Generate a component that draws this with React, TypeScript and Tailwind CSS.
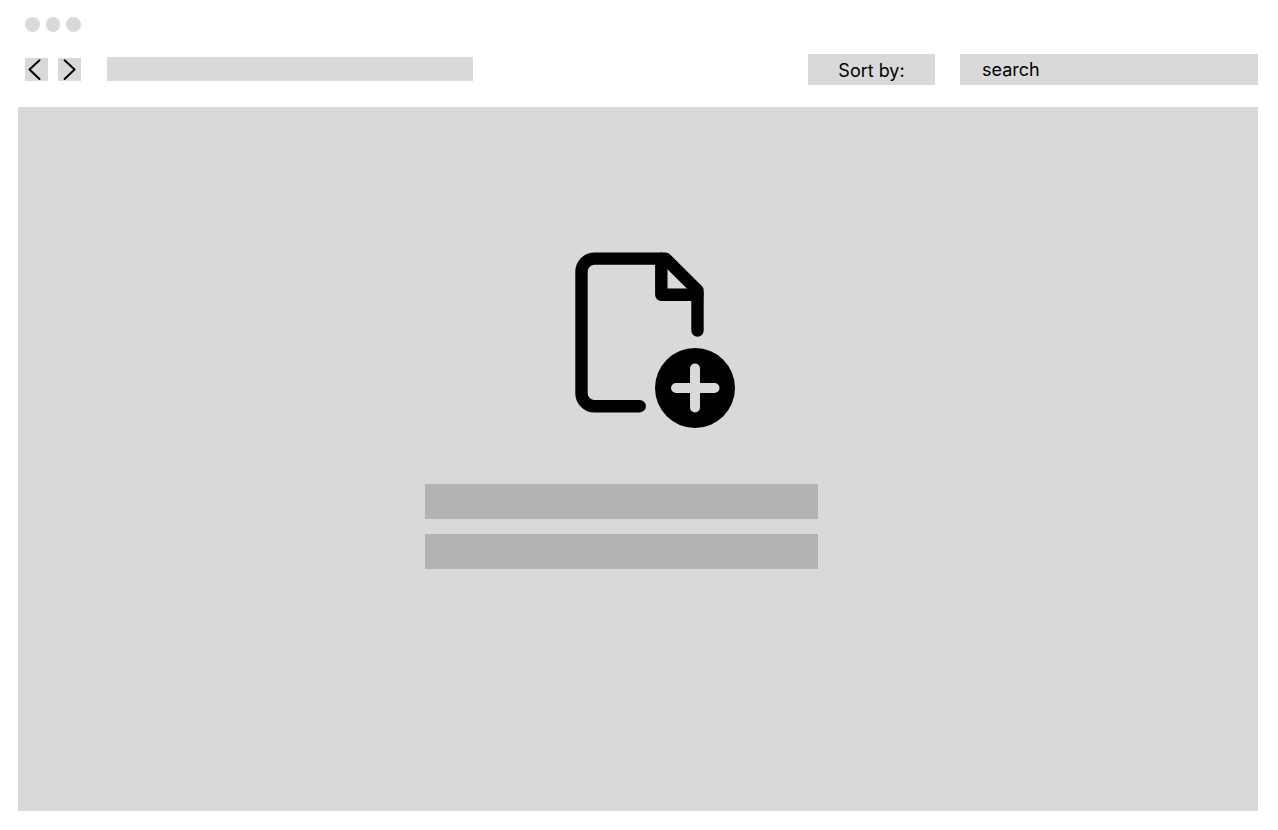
function WindowDots() {
  return (
    <div className="flex gap-[6px] px-[7px]" aria-hidden="true">
      <span className="size-[15px] rounded-full bg-[#d9d9d9]" />
      <span className="h-[15px] w-[14px] rounded-full bg-[#d9d9d9]" />
      <span className="size-[15px] rounded-full bg-[#d9d9d9]" />
    </div>
  );
}

function NavButton({ label, path }: { label: string; path: string }) {
  return (
    <button type="button" aria-label={label} className="size-[23px] bg-[#d9d9d9]">
      <svg viewBox="0 0 23 23" className="size-full" fill="none" stroke="#000" strokeWidth="2" strokeLinecap="round" strokeLinejoin="round">
        <path d={path} />
      </svg>
    </button>
  );
}

function AddFileIcon() {
  return (
    <svg viewBox="0 0 160 176" className="h-44 w-40" fill="none" stroke="#000" strokeWidth="12.4" strokeLinecap="round" strokeLinejoin="round">
      <path d="M64.7 154.2H19.7A13 13 0 0 1 6.5 141.2V19.6A13 13 0 0 1 19.7 6.6H90.5L122.5 38.4V78.5" />
      <path d="M86.3 6.6V42.8H122.5" />
      <circle cx="120" cy="136" r="40" fill="#000" stroke="none" />
      <path d="M120 116.5V155.5M101 136H139.5" stroke="#d9d9d9" strokeWidth="10" />
    </svg>
  );
}

export default function App() {
  return (
    <div className="flex min-h-screen flex-col bg-white pt-[17px] pr-5 pb-[19px] pl-[18px] font-['Inter',sans-serif] text-lg text-black">
      <WindowDots />
      <header className="mt-[22px] flex items-start pl-[7px]">
        <div className="flex items-end pt-[3px]">
          <nav className="flex gap-[10px]" aria-label="History">
            <NavButton label="Back" path="M14.5 2.2L4.5 11.5L14.5 21" />
            <NavButton label="Forward" path="M6.6 2.2L16.6 11.5L6.6 21" />
          </nav>
          <div className="ml-[26px] h-6 w-[366px] bg-[#d9d9d9]" />
        </div>
        <button type="button" className="ml-auto h-[31px] w-[127px] bg-[#d9d9d9] pt-[2px]">
          Sort by:
        </button>
        <input
          type="search"
          aria-label="search"
          placeholder="search"
          className="ml-[25px] h-[31px] w-[298px] appearance-none bg-[#d9d9d9] px-[22px] outline-none placeholder:text-black"
        />
      </header>
      <main className="mt-[22px] flex grow justify-center bg-[#d9d9d9] pt-[145px] pr-[33px]">
        <div className="flex w-[393px] flex-col">
          <div className="pl-[150px]">
            <AddFileIcon />
          </div>
          <div className="mt-14 h-[35px] bg-[#b3b3b3]" />
          <div className="mt-[15px] h-[35px] bg-[#b3b3b3]" />
        </div>
      </main>
    </div>
  );
}
